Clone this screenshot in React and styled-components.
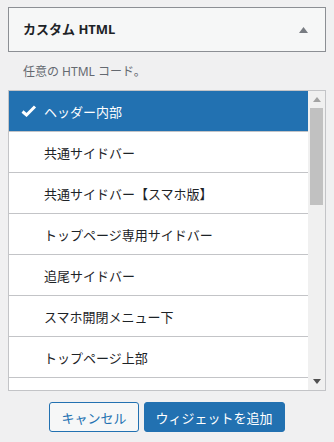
import React from "react";
import styled, { createGlobalStyle } from "styled-components";

const Global = createGlobalStyle`
  html, body { margin: 0; padding: 0; background: #f0f0f1; }
  body {
    font-family: "Noto Sans", "Noto Sans CJK JP", sans-serif;
    color: #1d2327;
    font-size: 13px;
  }
`;

const Page = styled.div`
  width: 334px;
  height: 442px;
  box-sizing: border-box;
  padding: 7px 8px 0 8px;
  display: flex;
  flex-direction: column;
`;

const Header = styled.div`
  height: 45px;
  box-sizing: border-box;
  border: 1px solid #8c8f94;
  background: #f6f7f7;
  display: flex;
  align-items: center;
  justify-content: space-between;
  padding: 0 17px 0 14px;
`;

const Title = styled.h3`
  margin: 0;
  font-size: 13px;
  font-weight: 700;
  line-height: 1;
  color: #1d2327;
`;

const Description = styled.p`
  margin: 0;
  height: 38px;
  display: flex;
  align-items: center;
  padding-left: 15px;
  color: #646970;
  font-size: 12px;
`;

const ListBox = styled.div`
  height: 301px;
  box-sizing: border-box;
  border: 1px solid #c3c4c7;
  background: #fff;
  display: flex;
  overflow: hidden;
`;

const Items = styled.ul`
  flex: 1;
  margin: 0;
  padding: 0;
  list-style: none;
  overflow: hidden;
`;

const Item = styled.li`
  height: 40px;
  border-bottom: 1px solid #c3c4c7;
  display: flex;
  align-items: center;
  gap: 7px;
  padding-left: 12px;
  font-size: 13px;
  background: ${(p) => (p.$selected ? "#2271b1" : "#fff")};
  color: ${(p) => (p.$selected ? "#fff" : "#1d2327")};
`;

const CheckSlot = styled.span`
  width: 16px;
  height: 16px;
  display: flex;
  align-items: center;
  justify-content: center;
`;

const Scrollbar = styled.div`
  width: 17px;
  background: #f0f0f0;
  display: flex;
  flex-direction: column;
`;

const Arrow = styled.div`
  height: 17px;
  display: flex;
  align-items: center;
  justify-content: center;
`;

const Track = styled.div`
  flex: 1;
  display: flex;
  flex-direction: column;
  padding: 0 2px;
`;

const Thumb = styled.div`
  height: 97px;
  background: #c1c1c1;
`;

const Actions = styled.div`
  display: flex;
  justify-content: center;
  gap: 5px;
  margin-top: 11px;
`;

const Button = styled.button`
  height: 30px;
  box-sizing: border-box;
  padding: 0 11px;
  border-radius: 3px;
  font-family: inherit;
  font-size: 13px;
  border: 1px solid #2271b1;
  background: ${(p) => (p.$primary ? "#2271b1" : "#f6f7f7")};
  color: ${(p) => (p.$primary ? "#fff" : "#2271b1")};
  cursor: pointer;
`;

const items = [
  "ヘッダー内部",
  "共通サイドバー",
  "共通サイドバー【スマホ版】",
  "トップページ専用サイドバー",
  "追尾サイドバー",
  "スマホ開閉メニュー下",
  "トップページ上部",
  "トップページ下部",
];

export default function App() {
  return (
    <>
      <Global />
      <Page>
        <Header>
          <Title>カスタム HTML</Title>
          <svg width="9" height="6" viewBox="0 0 9 6">
            <path d="M4.5 0 L9 6 L0 6 Z" fill="#787c82" />
          </svg>
        </Header>
        <Description>任意の HTML コード。</Description>
        <ListBox>
          <Items>
            {items.map((t, i) => (
              <Item key={t} $selected={i === 0}>
                <CheckSlot>
                  {i === 0 && (
                    <svg width="16" height="12" viewBox="0 0 16 12">
                      <path
                        d="M1.5 6.5 L5.5 10 L14 1.5"
                        fill="none"
                        stroke="#fff"
                        strokeWidth="3"
                        strokeLinejoin="miter"
                      />
                    </svg>
                  )}
                </CheckSlot>
                {t}
              </Item>
            ))}
          </Items>
          <Scrollbar>
            <Arrow>
              <svg width="8" height="5" viewBox="0 0 8 5">
                <path d="M4 0 L8 5 L0 5 Z" fill="#a3a3a3" />
              </svg>
            </Arrow>
            <Track>
              <Thumb />
            </Track>
            <Arrow>
              <svg width="8" height="5" viewBox="0 0 8 5">
                <path d="M0 0 L8 0 L4 5 Z" fill="#505050" />
              </svg>
            </Arrow>
          </Scrollbar>
        </ListBox>
        <Actions>
          <Button>キャンセル</Button>
          <Button $primary>ウィジェットを追加</Button>
        </Actions>
      </Page>
    </>
  );
}
